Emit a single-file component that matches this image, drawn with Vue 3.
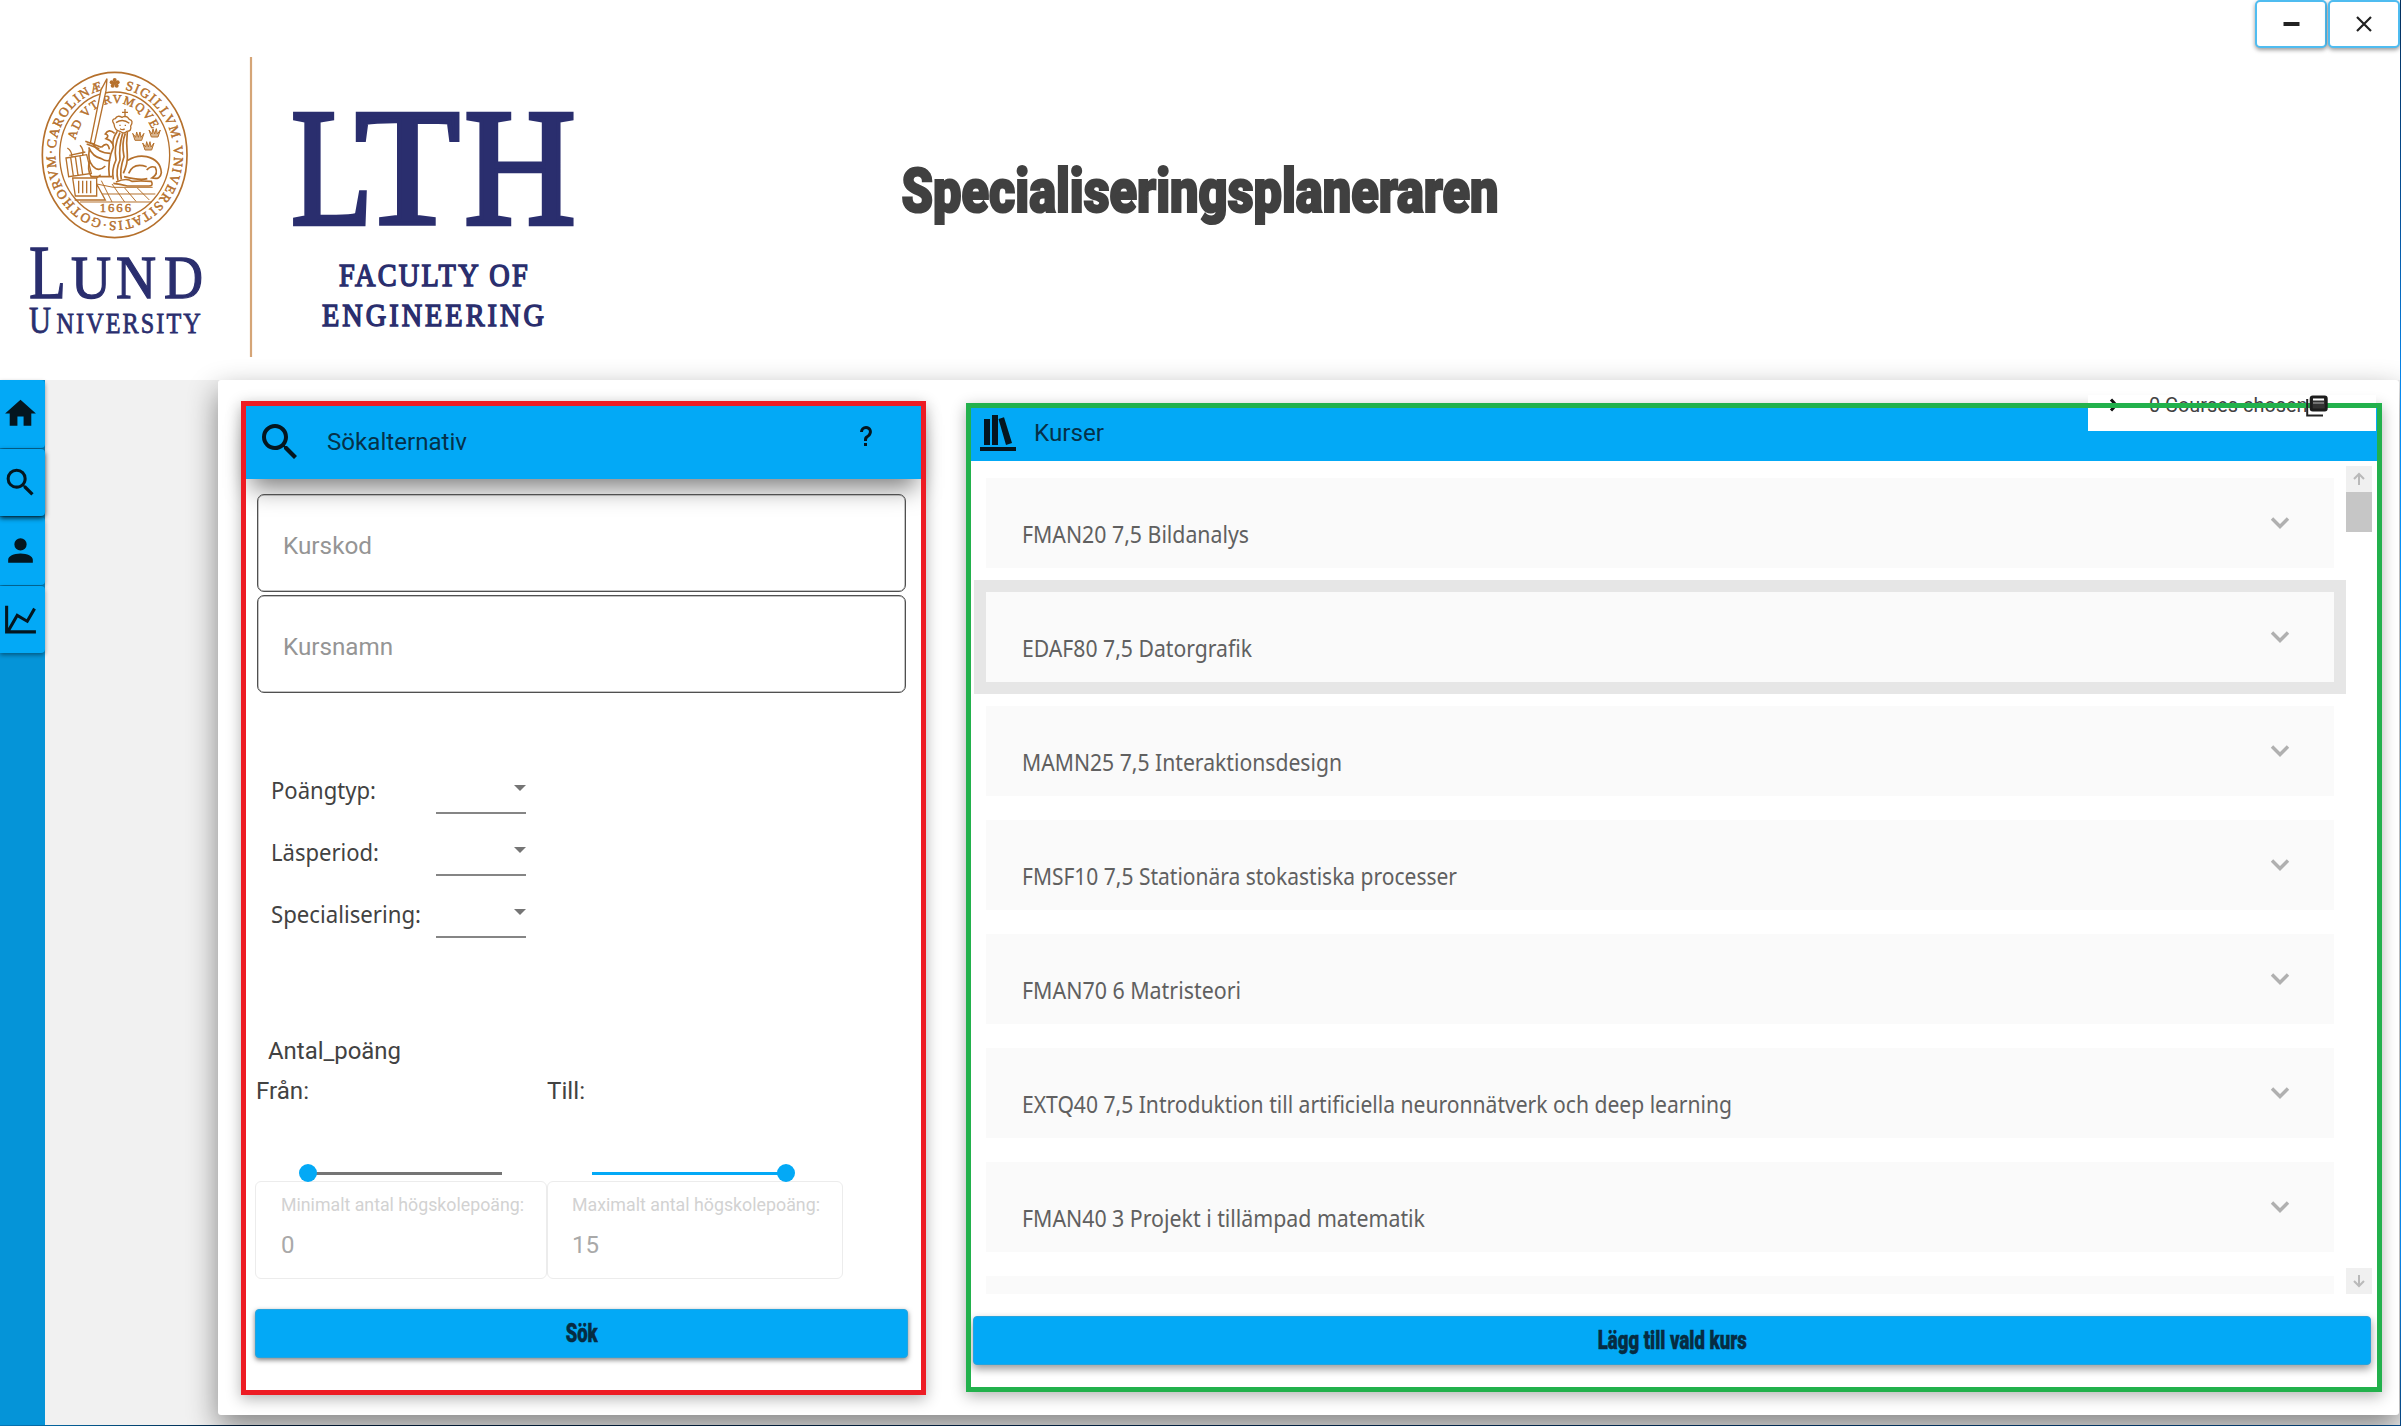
<script setup>
const courses = [
  { name: 'FMAN20 7,5 Bildanalys', width: 227 },
  { name: 'EDAF80 7,5 Datorgrafik', width: 230, selected: true },
  { name: 'MAMN25 7,5 Interaktionsdesign', width: 320 },
  { name: 'FMSF10 7,5 Stationära stokastiska processer', width: 435 },
  { name: 'FMAN70 6 Matristeori', width: 219 },
  { name: 'EXTQ40 7,5 Introduktion till artificiella neuronnätverk och deep learning', width: 710 },
  { name: 'FMAN40 3 Projekt i tillämpad matematik', width: 403 },
  { name: '', width: 0 },
]
const filters = [
  { label: 'Poängtyp:', width: 105 },
  { label: 'Läsperiod:', width: 108 },
  { label: 'Specialisering:', width: 150 },
]
const magnify = 'M9.5,3A6.5,6.5 0 0,1 16,9.5C16,11.11 15.41,12.59 14.44,13.73L14.71,14H15.5L20.5,19L19,20.5L14,15.5V14.71L13.73,14.44C12.59,15.41 11.11,16 9.5,16A6.5,6.5 0 0,1 3,9.5A6.5,6.5 0 0,1 9.5,3M9.5,5C7,5 5,7 5,9.5C5,12 7,14 9.5,14C12,14 14,12 14,9.5C14,7 12,5 9.5,5Z'
const nav = [
  'M10,20V14H14V20H19V12H22L12,3L2,12H5V20H10Z',
  magnify,
  'M12,4A4,4 0 0,1 16,8A4,4 0 0,1 12,12A4,4 0 0,1 8,8A4,4 0 0,1 12,4M12,14C16.42,14 20,15.79 20,18V20H4V18C4,15.79 7.58,14 12,14Z',
  'M16,11.78L20.24,4.45L21.97,5.45L16.74,14.5L10.23,10.75L5.46,19H22V21H2V3H4V17.54L9.5,8L16,11.78Z',
]
const crowns = [[325, 228], [374, 218], [355, 257]]

// Squeezes or stretches a label horizontally to the given width.
const vFit = {
  mounted(el, { value }) {
    const w = el.getBoundingClientRect().width
    if (w && value) el.style.transform = `scaleX(${value / w})`
  },
}
</script>

<template>
  <div class="window">
    <header class="top">
      <svg class="logo" width="600" height="380" viewBox="0 0 600 380">
        <g transform="translate(30 60) scale(0.33333)" fill="none" stroke="#b5702c" stroke-width="4">
          <ellipse cx="254" cy="285" rx="217" ry="248" stroke-width="5" />
          <ellipse cx="254" cy="285" rx="165" ry="189" />
          <path id="ring" d="M254 86 A178 199 0 1 1 253.9 86" stroke="none" />
          <path id="motto" d="M136 240 A124 146 0 0 1 370 217" stroke="none" />
          <g fill="#b5702c" stroke="#b5702c" stroke-width="1.4" class="seal-text">
            <text font-size="40"><textPath href="#ring" startOffset="31" textLength="1118">SIGILLVM·VNIVERSITATIS·GOTHORVM·CAROLINÆ</textPath></text>
            <text font-size="37"><textPath href="#motto" startOffset="0" textLength="318">AD VT RVMQVE</textPath></text>
            <text x="209" y="457" font-size="38" textLength="94">1666</text>
          </g>
          <g fill="#b5702c" stroke="none">
            <circle cx="254" cy="60" r="6" /><circle cx="263" cy="67" r="6" /><circle cx="260" cy="77" r="6" />
            <circle cx="248" cy="77" r="6" /><circle cx="245" cy="67" r="6" /><circle cx="254" cy="69" r="6" />
          </g>
          <path d="M231 56 L213 90 L181 249 L193 252 L228 92 Z" fill="#fff" />
          <path d="M166 244 L214 262 M170 252 L208 266" stroke-width="5" />
          <g v-for="(c, i) in crowns" :key="i" :transform="`translate(${c[0]} ${c[1]})`">
            <path d="M-17 -8 L-10 13 H10 L17 -8 L8 4 L5 -12 L0 4 L-5 -12 L-8 4 Z" stroke-width="3" fill="#d9b58f" />
          </g>
          <path d="M285 147 V172 M276 157 H294" />
          <path d="M252 192 Q242 178 256 176 Q262 164 276 172 Q290 164 298 178 Q312 182 302 198 Q306 214 290 214 Q282 224 270 214 Q254 212 252 192 Z M258 188 Q278 174 298 190 M268 196 h4 M284 196 h4 M270 206 q8 6 14 0" />
          <path d="M262 214 Q244 240 250 262 Q232 300 238 350 M270 218 Q250 260 258 300 Q244 330 250 358 M278 220 Q266 260 270 300 Q256 330 264 362 M286 220 Q274 250 282 290 Q268 330 274 358 M292 216 Q288 250 292 284 Q294 310 280 340" stroke-width="5" />
          <path d="M254 220 Q236 204 226 222 Q240 226 228 236 Q242 240 248 252 M176 262 Q188 290 214 296 Q230 306 240 300 M190 254 Q206 280 240 280 M178 268 Q172 300 188 318 Q206 338 226 318 M180 300 Q170 330 184 350 H246 M214 262 q20 -20 24 6" stroke-width="5" />
          <path d="M292 302 Q320 284 350 290 Q392 300 394 338 Q392 360 366 354 Q386 342 376 322 Q362 316 350 330 M296 340 Q310 306 350 320 M282 350 Q330 362 352 356 M258 366 Q290 352 306 364 Q330 362 364 364 Q372 378 356 378 H292 Q270 372 250 370" stroke-width="5" />
          <path d="M108 294 L170 284 L184 340 L116 350 Z M122 292 l8 56 M136 290 l8 56 M150 288 l8 56 M112 264 Q126 272 126 292 M150 256 Q162 268 158 286 M118 286 L166 276" />
          <path d="M128 354 H200 V408 H136 Z M146 362 V400 M158 362 V400 M170 362 V400 M182 362 V400 M200 354 L212 344 M134 420 H226 L200 372" />
          <path d="M200 372 L250 382 H368 M150 426 H366 M216 402 H376 M214 362 L246 426 M246 372 L284 426 M284 384 L318 424 M322 384 L358 420" stroke-width="3" />
        </g>
        <path d="M251 57 V357" stroke="#d5a577" stroke-width="2.2" />
        <g class="brand">
          <g stroke-width="4.500">
            <text x="291" y="223.500" font-size="167" textLength="82" lengthAdjust="spacingAndGlyphs">L</text>
            <text x="355" y="223.500" font-size="167" textLength="105" lengthAdjust="spacingAndGlyphs">T</text>
            <text x="464" y="223.500" font-size="167" textLength="112" lengthAdjust="spacingAndGlyphs">H</text>
          </g>
          <g stroke-width="1.3">
            <text x="29" y="297.500" font-size="77" textLength="37" lengthAdjust="spacingAndGlyphs">L</text>
            <text x="71" y="297.500" font-size="61" textLength="40" lengthAdjust="spacingAndGlyphs">U</text>
            <text x="116" y="297.500" font-size="61" textLength="40" lengthAdjust="spacingAndGlyphs">N</text>
            <text x="164" y="297.500" font-size="61" textLength="39" lengthAdjust="spacingAndGlyphs">D</text>
          </g>
          <g stroke-width=".8">
            <text x="29" y="332.500" font-size="37" textLength="22" lengthAdjust="spacingAndGlyphs">U</text>
            <text transform="translate(56.500 332.500) scale(.82 1)" x="0" y="0" font-size="29.500" textLength="176" lengthAdjust="spacing">NIVERSITY</text>
          </g>
          <g stroke-width="1.500">
            <text transform="translate(339 286) scale(.87 1)" x="0" y="0" font-size="32.500" textLength="217" lengthAdjust="spacing">FACULTY OF</text>
            <text transform="translate(322 325.500) scale(.87 1)" x="0" y="0" font-size="32.500" textLength="255" lengthAdjust="spacing">ENGINEERING</text>
          </g>
        </g>
      </svg>
      <svg class="title" width="640" height="110" viewBox="0 0 640 110">
        <text x="12.500" y="71.500" font-size="60.500" textLength="597" lengthAdjust="spacingAndGlyphs">Specialiseringsplaneraren</text>
      </svg>
      <div class="controls">
        <button><svg width="36" height="36" viewBox="0 0 36 36"><path d="M10.500 16h16v4H10.500z" /></svg></button>
        <button><svg width="36" height="36" viewBox="0 0 36 36"><path d="M11 11 L25 25 M25 11 L11 25" stroke="#222" stroke-width="2.200" /></svg></button>
      </div>
    </header>

    <div class="body">
      <nav class="side">
        <button v-for="(d, i) in nav" :key="i" :class="{ active: i === 1 }">
          <svg width="37" height="37" viewBox="0 0 24 24"><path :d="d" /></svg>
        </button>
      </nav>

      <main class="panel">
        <section class="card search">
          <div class="bar">
            <svg class="bar-icon" width="48" height="48" viewBox="0 0 24 24"><path :d="magnify" /></svg>
            <span v-fit="140" class="fit">Sökalternativ</span>
            <svg class="help" width="24" height="24" viewBox="0 0 24 24"><path d="M10,19H13V22H10V19M12,2C17.35,2.22 19.68,7.62 16.5,11.67C15.67,12.67 14.33,13.33 13.67,14.17C13,15 13,16 13,17H10C10,15.33 10,13.92 10.67,12.92C11.33,11.92 12.67,11.33 13.5,10.67C15.92,8.43 15.32,5.26 12,5A3,3 0 0,0 9,8H6A6,6 0 0,1 12,2Z" /></svg>
          </div>
          <div class="form">
            <div class="input"><span v-fit="89" class="fit">Kurskod</span></div>
            <div class="input"><span v-fit="110" class="fit">Kursnamn</span></div>
            <div class="filters">
              <div v-for="f in filters" :key="f.label" class="filter">
                <div class="filter-label"><span v-fit="f.width" class="fit">{{ f.label }}</span></div>
                <div class="select"><i></i></div>
              </div>
            </div>
            <div class="points-title"><span v-fit="133" class="fit">Antal_poäng</span></div>
            <div class="points">
              <div class="from">
                <div class="points-label"><span v-fit="53" class="fit">Från:</span></div>
                <div class="slider"><b></b></div>
                <div class="value"><small><span v-fit="243" class="fit">Minimalt antal högskolepoäng:</span></small><p>0</p></div>
              </div>
              <div class="to">
                <div class="points-label"><span v-fit="38" class="fit">Till:</span></div>
                <div class="slider full"><b></b></div>
                <div class="value"><small><span v-fit="248" class="fit">Maximalt antal högskolepoäng:</span></small><p>15</p></div>
              </div>
            </div>
            <button class="action"><span v-fit="32" class="fit">Sök</span></button>
          </div>
        </section>

        <section class="card list">
          <div class="bar">
            <svg class="books" width="36" height="36" viewBox="0 0 36 36"><path d="M0 32h36v4H0zM4 4h6v26H4zM12 0h6v30h-6zM18.500 4 L24 2.200 L32 28 L26 30z" /></svg>
            <span v-fit="70" class="fit">Kurser</span>
          </div>
          <div class="chosen">
            <svg width="10" height="14" viewBox="0 0 10 14"><path d="M2 1.500 L7 7 L2 12.500" fill="none" stroke="#111" stroke-width="3" /></svg>
            <span v-fit="156" class="fit">0 Courses chosen</span>
            <svg class="stack" width="22" height="22" viewBox="0 0 22 22"><path d="M1.200 4V20.500H17" fill="none" stroke="#222" stroke-width="2" /><rect x="5.200" y="2" width="15" height="13" rx="1.500" fill="#333" stroke="#1c1c1c" stroke-width="3" /><path d="M7 4.500h11" stroke="#fff" stroke-width="2" /><path d="M7 8h11" stroke="#888" stroke-width="1.500" /></svg>
          </div>
          <div class="scroller">
            <div class="items">
              <div v-for="c in courses" :key="c.name" class="item" :class="{ selected: c.selected }">
                <div class="item-body">
                  <span v-fit="c.width" class="fit">{{ c.name }}</span>
                  <svg width="20" height="14" viewBox="0 0 20 14"><path d="M2 2.500 L10 10.500 L18 2.500" /></svg>
                </div>
              </div>
            </div>
            <div class="scrollbar">
              <div class="arrow"><svg width="26" height="26" viewBox="0 0 26 26"><path d="M13 19V8M8 13l5-5 5 5" /></svg></div>
              <div class="thumb"></div>
              <div class="arrow down"><svg width="26" height="26" viewBox="0 0 26 26"><path d="M13 7v11M8 13l5 5 5-5" /></svg></div>
            </div>
          </div>
          <button class="action"><span v-fit="149" class="fit">Lägg till vald kurs</span></button>
        </section>
      </main>
      <div class="edge"></div>
    </div>
    <div class="desktop-right"></div>
    <div class="desktop-bottom"></div>
  </div>
</template>

<style>
body { margin: 0; overflow: hidden; }
</style>

<style scoped>
* { box-sizing: border-box; }
.window { position: relative; width: 2401px; height: 1426px; overflow: hidden; background: #fff; font-family: Roboto, sans-serif; font-size: 24px; color: #424242; }
button { border: 0; padding: 0; margin: 0; font: inherit; color: inherit; }
svg { display: block; flex: none; }
.fit { display: inline-block; white-space: nowrap; transform-origin: left center; }

.top { display: flex; height: 380px; align-items: flex-start; }
.brand { fill: #2a2e6e; stroke: #2a2e6e; font-family: "Liberation Serif", serif; }
.seal-text { font-family: "Liberation Serif", serif; }
.title { margin: 140px 0 0 289px; overflow: visible; font-family: Roboto, sans-serif; font-weight: 900; fill: #404040; stroke: #404040; stroke-width: 2.200px; }
.controls { display: flex; gap: 1px; margin-left: auto; padding-right: 1px; }
.controls button { display: flex; align-items: center; justify-content: center; width: 72px; height: 48px; background: #fff; border: 2px solid #4fbcf0; border-radius: 5px; box-shadow: 0 2px 4px rgba(0, 0, 0, .4); fill: #222; }

.body { display: flex; height: 1045px; background: #f1f1f1; }
.side { width: 45px; background: #0594d8; }
.side button { display: flex; align-items: center; width: 44.500px; height: 67.500px; margin-bottom: 1px; padding-left: 1.500px; background: #03a9f6; border-radius: 0 4px 4px 0; box-shadow: 0 2px 4px rgba(0, 0, 0, .4); fill: #04161f; }
.side button.active { position: relative; box-shadow: 0 2px 5px rgba(0, 0, 0, .8); }

.panel { display: flex; align-items: flex-start; width: 2181px; height: 1034.500px; margin-left: 173px; background: #fff; border-radius: 3px; box-shadow: 0 12px 30px rgba(0, 0, 0, .46); }
.edge { width: 1px; }
.card { position: relative; padding: 5px; background: #fff; box-shadow: 0 4px 14px rgba(0, 0, 0, .3); }
.card::after { content: ''; position: absolute; inset: 0; border: 5px solid #ed1c24; pointer-events: none; z-index: 3; }
.search { width: 685px; height: 994px; margin: 21px 0 0 23px; }
.list { width: 1416px; height: 989px; margin: 23px 0 0 40px; }
.list::after { border-color: #22b14c; }

.bar { display: flex; align-items: center; height: 73px; background: #03a9f6; color: #053149; fill: #04161f; }
.search .bar { padding: 0 0 2px 10px; box-shadow: 0 14px 24px -5px rgba(0, 0, 0, .5); }
.search .bar span { margin-left: 23px; }
.help { margin: -11px 43px 0 auto; }
.list .bar { height: 53px; padding: 0 0 3px 9px; }
.books { margin-top: -1px; }
.list .bar span { margin-left: 18px; }

.form { padding: 15px 15px 0 11px; }
.input { position: relative; display: flex; align-items: center; width: 649px; height: 98px; margin-bottom: 3px; padding: 5px 0 0 24.500px; border: 1.500px solid #505050; border-radius: 7px; color: #959595; box-shadow: inset 0 0 0 .5px #888; }
.filters { margin-top: 59px; }
.filter { display: flex; height: 62px; padding-left: 13.500px; }
.filter-label { width: 165.500px; line-height: 76px; font-family: "Noto Sans", sans-serif; font-size: 23.500px; }
.select { display: flex; justify-content: flex-end; width: 90px; border-bottom: 2px solid #858585; }
.select i { width: 0; height: 0; margin-top: 33px; border: 6px solid transparent; border-top-color: #757575; border-bottom: 0; }
.points-title { margin-top: 93px; padding-left: 11px; line-height: 40px; }
.points { display: flex; margin-left: -2px; }
.from { width: 292px; }
.to { width: 297px; }
.points-label { line-height: 40px; padding-left: 1px; }
.to .points-label { padding-left: 0; }
.slider { position: relative; z-index: 1; display: flex; align-items: center; width: 194px; height: 20px; margin: 52px 0 0 53px; background: linear-gradient(#757575, #757575) center / 100% 3px no-repeat; }
.slider b { width: 18px; height: 18px; margin-left: -9px; border-radius: 50%; background: #03a9f6; }
.slider.full { margin-left: 45px; background-image: linear-gradient(#03a9f6, #03a9f6); }
.slider.full b { margin-left: 185px; flex: none; }
.value { height: 98px; margin-top: -2px; padding: 12px 0 0 25px; border: 1.500px solid #ececec; border-radius: 6px; }
.to .value { padding-left: 24px; width: 296px; }
.value small { display: block; font-size: 18px; line-height: 22px; color: #d2d2d2; }
.value p { margin: 13px 0 0; line-height: 32px; color: #a9a9a9; }
.action { display: flex; align-items: center; justify-content: center; width: 653px; height: 49px; margin: 30px 0 0 -2px; background: #03a9f6; border: 1px solid #25a4de; border-radius: 4px; box-shadow: 0 2px 5px rgba(0, 0, 0, .5); color: #062c42; font-weight: 900; font-size: 25px; -webkit-text-stroke: .5px #062c42; }
.action .fit { transform-origin: center; }

.chosen { position: absolute; top: -8px; left: 1122px; display: flex; align-items: center; width: 288px; height: 36px; padding: 0 0 16px 21px; background: #fff; font-size: 20px; }
.chosen span { width: 157px; margin-left: 30px; }
.chosen .stack { position: absolute; left: 218px; top: 0; z-index: 4; }
.scroller { display: flex; height: 828px; margin: 5px 0 0 3px; overflow: hidden; }
.items { width: 1372px; }
.item { height: 114px; padding: 12px; }
.item.selected { background: #e6e6e6; }
.item-body { display: flex; align-items: flex-start; justify-content: space-between; height: 90px; padding: 36px 44px 0 36px; background: #fafafa; font-family: "Noto Sans", sans-serif; font-size: 23.500px; line-height: 40px; color: #606060; }
.item-body svg { margin-top: 2px; fill: none; stroke: #b0b0b0; stroke-width: 3.400px; }
.scrollbar { display: flex; flex-direction: column; width: 26px; }
.arrow { height: 26px; background: #f0f0f0; fill: none; stroke: #b9b9b9; stroke-width: 2px; }
.thumb { height: 40px; background: #c6c6c6; }
.down { margin-top: auto; }
.list .action { width: 1398px; height: 49px; margin: 22px 0 0 2px; box-shadow: 0 4px 9px rgba(0, 0, 0, .4); }

.desktop-right { position: absolute; top: 0; right: 0; width: 1px; height: 1426px; background: linear-gradient(#04305e, #06519a 15%, #078cf5 28%, #0a9bff 60%, #0a84e8 88%, #07447f); }
.desktop-bottom { height: 1px; background: linear-gradient(90deg, #0577b8, #03203f 10%, #04305e 60%, #07549a); }
</style>
